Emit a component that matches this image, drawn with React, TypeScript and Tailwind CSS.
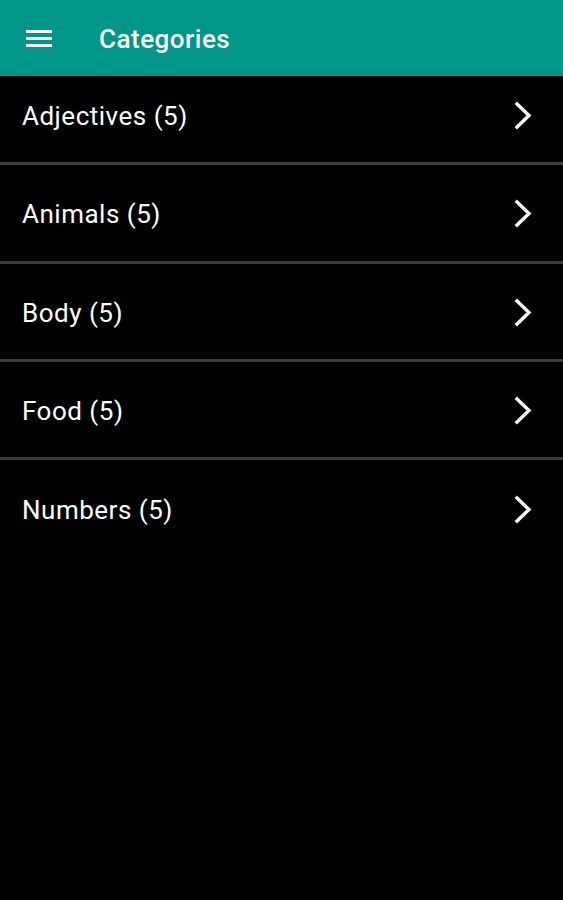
import React from "react";

const items = [
  { label: "Adjectives (5)", cls: "h-[86px] pb-[6px]" },
  { label: "Animals (5)", cls: "h-[96px] pt-[2px]" },
  { label: "Body (5)", cls: "h-[95px] pt-[3px]" },
  { label: "Food (5)", cls: "h-[95px] pt-[3px]" },
  { label: "Numbers (5)", cls: "h-[95px] pt-[4px]" },
];

function Chevron() {
  return (
    <svg width="24" height="30" viewBox="0 0 24 30" fill="none">
      <path d="M6 3 L18 14.5 L6 26" stroke="white" strokeWidth="3.4" strokeLinecap="square" strokeLinejoin="miter" />
    </svg>
  );
}

export default function App() {
  return (
    <div className="w-[563px] h-[900px] bg-black text-white" style={{ fontFamily: "Roboto, 'Noto Sans', sans-serif" }}>
      <div className="h-[76px] bg-[#009688] flex items-center">
        <div className="w-[26px] ml-[26px] flex flex-col gap-[4px]">
          <div className="h-[3px] bg-white" />
          <div className="h-[3px] bg-white" />
          <div className="h-[3px] bg-white" />
        </div>
        <div className="ml-[47px] pt-[2px] text-[26px] font-medium tracking-[0.5px]">Categories</div>
      </div>
      <div className="flex flex-col">
        {items.map((it, i) => (
          <div key={it.label} className={i < 4 ? "border-b-[3px] border-[#3c3c3c]" : ""}>
            <div className={`flex items-center justify-between pl-[22px] pr-[28px] ${it.cls}`}>
              <span className="text-[26px] leading-none tracking-[0.5px]">{it.label}</span>
              <Chevron />
            </div>
          </div>
        ))}
      </div>
    </div>
  );
}
